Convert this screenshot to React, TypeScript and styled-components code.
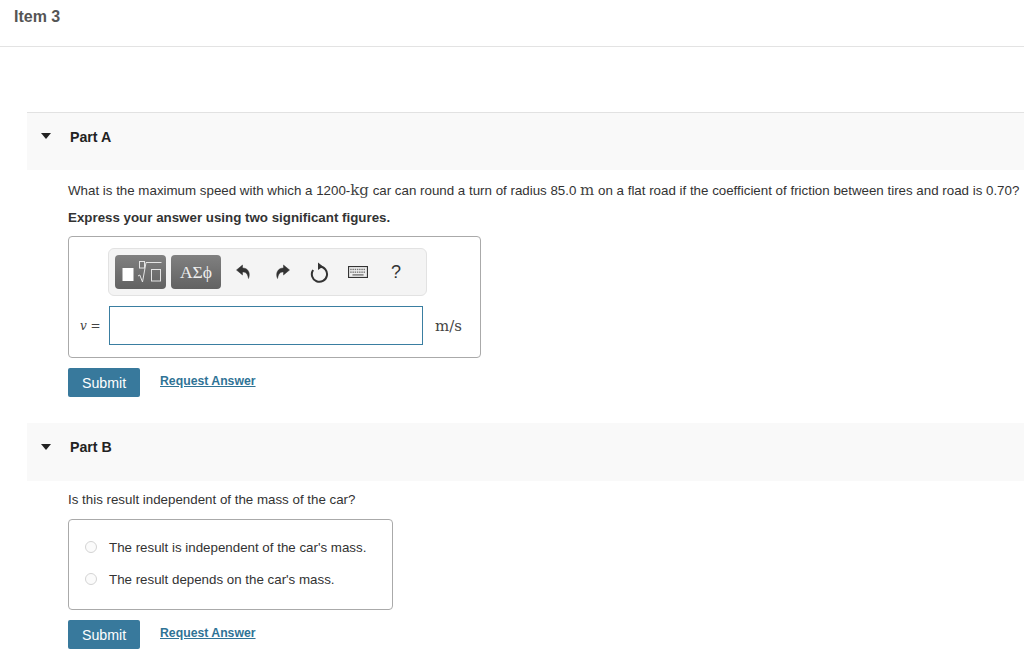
import styled, { createGlobalStyle } from 'styled-components';

const GlobalStyle = createGlobalStyle`
    html, body {
        margin: 0;
        padding: 0;
        background: #fff;
        overflow: hidden;
    }
    body {
        font-family: "Liberation Sans", Arial, sans-serif;
        color: #333;
    }
`;

const PageDiv = styled.div`
    width: 1024px;
    height: 664px;
    overflow: hidden;
`;
const ItemHeader = styled.header`
    height: 47px;
    box-sizing: border-box;
    padding: 7px 0 0 14px;
    border-bottom: 1px solid #e3e3e3;
    font-size: 16px;
    line-height: 20px;
    font-weight: bold;
    color: #555;
`;
const Parts = styled.div`
    padding: 65px 0 0 27px;
`;
const PartHeader = styled.div<{ $first?: boolean }>`
    height: 58px;
    box-sizing: border-box;
    display: flex;
    align-items: center;
    padding: 0 0 10px 14px;
    background: #f9f9f9;
    border-top: ${(p) => (p.$first ? '1px solid #e2e2e2' : 'none')};
    font-size: 14.2px;
    font-weight: bold;
    color: #222;
`;
const Caret = styled.span`
    width: 0;
    height: 0;
    border-left: 5.5px solid transparent;
    border-right: 5.5px solid transparent;
    border-top: 6px solid #222;
    margin-right: 18px;
    margin-top: -1px;
`;
const PartTitle = styled.span`
    margin-left: 1px;
`;
const PartBody = styled.div<{ $top: number }>`
    padding: ${(p) => p.$top}px 0 0 41px;
`;
const Prompt = styled.p`
    margin: 0;
    font-size: 13.33px;
    line-height: 18px;
    white-space: nowrap;
    color: #333;
`;
const Instruction = styled(Prompt)`
    margin-top: 9px;
    font-weight: bold;
`;
const Unit = styled.span`
    font-family: "DejaVu Serif", "Liberation Serif", serif;
    font-size: 15px;
    line-height: 1;
    color: #444;
`;
const AnswerBox = styled.div`
    width: 413px;
    height: 122px;
    box-sizing: border-box;
    margin-top: 9px;
    padding: 11px 0 0 0;
    border: 1px solid #aaa;
    border-radius: 4px;
`;
const Toolbar = styled.div`
    width: 319px;
    height: 48px;
    box-sizing: border-box;
    margin-left: 39px;
    padding: 0 0 0 6px;
    display: flex;
    align-items: center;
    background: #f4f4f4;
    border: 1px solid #e2e2e2;
    border-radius: 6px;
`;
const ToolButton = styled.div<{ $width: number }>`
    width: ${(p) => p.$width}px;
    height: 34px;
    margin-right: 5px;
    flex: none;
    display: flex;
    align-items: center;
    justify-content: center;
    background: linear-gradient(#808080, #626262);
    border-radius: 4px;
    color: #eee;
    font-family: "Liberation Serif", "DejaVu Serif", serif;
    font-size: 17.5px;
`;
const IconSlot = styled.div<{ $w: number }>`
    width: ${(p) => p.$w}px;
    flex: none;
    display: flex;
    justify-content: center;
    align-items: center;
    color: #333;
    font-size: 18px;
`;
const InputRow = styled.div`
    display: flex;
    align-items: center;
    margin-top: 10px;
`;
const VarLabel = styled.span`
    width: 40px;
    box-sizing: border-box;
    padding-left: 11px;
    font-family: "DejaVu Serif", "Liberation Serif", serif;
    font-size: 12px;
    color: #444;
`;
const AnswerInput = styled.div`
    width: 314px;
    height: 39px;
    box-sizing: border-box;
    background: #fff;
    border: 1px solid #3a7ea1;
`;
const UnitLabel = styled.span`
    margin-left: 12px;
    font-family: "DejaVu Serif", "Liberation Serif", serif;
    font-size: 15px;
    color: #444;
`;
const Actions = styled.div`
    display: flex;
    align-items: center;
    margin-top: 10px;
`;
const SubmitButton = styled.button`
    width: 72px;
    height: 29px;
    padding: 0;
    border: none;
    border-radius: 2px;
    background: #38799c;
    color: #fff;
    font-family: "Liberation Sans", Arial, sans-serif;
    font-size: 14.2px;
`;
const AnswerLink = styled.a`
    margin-left: 20px;
    margin-top: -3px;
    font-size: 12.25px;
    font-weight: bold;
    color: #2f7396;
    text-decoration: underline;
`;
const Spacer = styled.div`
    height: 26px;
`;
const ChoiceBox = styled.div`
    width: 325px;
    height: 91px;
    box-sizing: border-box;
    margin-top: 10px;
    padding: 11px 0 0 16px;
    border: 1px solid #aaa;
    border-radius: 4px;
`;
const Choice = styled.div`
    display: flex;
    align-items: center;
    height: 32px;
    font-size: 13.33px;
`;
const Radio = styled.span`
    width: 12px;
    height: 12px;
    box-sizing: border-box;
    margin-right: 12px;
    margin-top: -1px;
    border: 1px solid #d4d4d4;
    border-radius: 50%;
    background: #fbfbfb;
`;

function MatrixIcon() {
    return (
        <svg width="46" height="30" viewBox="0 0 46 30">
            <rect x="4.5" y="11" width="11" height="13" fill="#fff" />
            <rect x="21.5" y="4.5" width="5" height="6.5" fill="none" stroke="#e4e4e4" />
            <path d="M20 19l1.800-1 2.700 7L28 5.500h15.500" fill="none" stroke="#e4e4e4" />
            <rect x="33.500" y="12.500" width="9" height="11.500" fill="none" stroke="#e4e4e4" />
        </svg>
    );
}

function UndoIcon({ flip }: { flip?: boolean }) {
    return (
        <svg width="15" height="16" viewBox="0 0 15 16" style={flip ? { transform: 'scaleX(-1)' } : undefined}>
            <path d="M6.5 1L0.5 6 6.5 11V8c3 0 5 1 6 6.500C14.800 9 12 4 6.500 4z" fill="#333" stroke="#333" strokeWidth="0.5" />
        </svg>
    );
}

function RedoIcon() {
    return (
        <svg width="19" height="21" viewBox="0 0 19 21">
            <path d="M9.500 4.600a7.600 7.600 0 1 1-6.400 3.400" fill="none" stroke="#333" strokeWidth="2" />
            <path d="M8 0.500L13 4.500 8 8z" fill="#333" />
        </svg>
    );
}

function KeyboardIcon() {
    const keys = [];
    for (let i = 0; i < 7; i++) {
        keys.push(<rect key={`a${i}`} x={2 + i * 2} y="2.5" width="1.3" height="1.3" fill="#777" />);
        keys.push(<rect key={`b${i}`} x={2 + i * 2} y="5" width="1.3" height="1.3" fill="#777" />);
    }
    return (
        <svg width="20" height="12" viewBox="0 0 18 11" preserveAspectRatio="none">
            <rect x="0.5" y="0.5" width="17" height="10" fill="#eee" stroke="#333" />
            {keys}
            <rect x="4" y="7.5" width="10" height="1.3" fill="#777" />
        </svg>
    );
}

export default function App() {
    return (
        <PageDiv>
            <GlobalStyle />
            <ItemHeader>Item 3</ItemHeader>
            <Parts>
                <PartHeader $first>
                    <Caret />
                    <PartTitle>Part A</PartTitle>
                </PartHeader>
                <PartBody $top={12}>
                    <Prompt>
                        What is the maximum speed with which a 1200-<Unit>kg</Unit> car can round a turn of radius 85.0 <Unit>m</Unit> on a flat road if the coefficient of friction between tires and road is 0.70?
                    </Prompt>
                    <Instruction>Express your answer using two significant figures.</Instruction>
                    <AnswerBox>
                        <Toolbar>
                            <ToolButton $width={51}><MatrixIcon /></ToolButton>
                            <ToolButton $width={50}>ΑΣϕ</ToolButton>
                            <IconSlot $w={34}><UndoIcon /></IconSlot>
                            <IconSlot $w={44}><UndoIcon flip /></IconSlot>
                            <IconSlot $w={30}><RedoIcon /></IconSlot>
                            <IconSlot $w={48}><KeyboardIcon /></IconSlot>
                            <IconSlot $w={28}>?</IconSlot>
                        </Toolbar>
                        <InputRow>
                            <VarLabel><i>v</i> =</VarLabel>
                            <AnswerInput />
                            <UnitLabel>m/s</UnitLabel>
                        </InputRow>
                    </AnswerBox>
                    <Actions>
                        <SubmitButton>Submit</SubmitButton>
                        <AnswerLink>Request Answer</AnswerLink>
                    </Actions>
                </PartBody>
                <Spacer />
                <PartHeader>
                    <Caret />
                    <PartTitle>Part B</PartTitle>
                </PartHeader>
                <PartBody $top={10}>
                    <Prompt>Is this result independent of the mass of the car?</Prompt>
                    <ChoiceBox>
                        <Choice><Radio />The result is independent of the car's mass.</Choice>
                        <Choice><Radio />The result depends on the car's mass.</Choice>
                    </ChoiceBox>
                    <Actions>
                        <SubmitButton>Submit</SubmitButton>
                        <AnswerLink>Request Answer</AnswerLink>
                    </Actions>
                </PartBody>
            </Parts>
        </PageDiv>
    );
}
